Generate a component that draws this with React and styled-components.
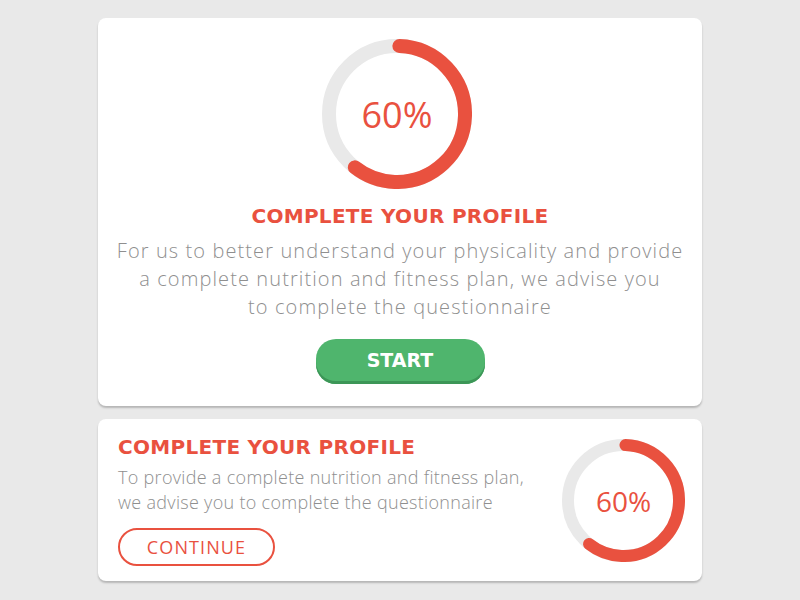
import React from "react";
import styled, { createGlobalStyle } from "styled-components";

const RED = "#e9513f";
const FONT = `"Open Sans", Lato, sans-serif`;
const HEAD = `"DejaVu Sans", "Open Sans", sans-serif`;

const Global = createGlobalStyle`
  html, body { margin: 0; padding: 0; background: #e9e9e9; }
  body { font-family: ${FONT}; }
`;

const Page = styled.div`
  width: 800px;
  height: 600px;
  box-sizing: border-box;
  padding: 18px 98px 0;
  display: flex;
  flex-direction: column;
  gap: 13px;
`;

const Card = styled.div`
  background: #fff;
  border-radius: 8px;
  box-shadow: 0 2px 2px rgba(0, 0, 0, 0.22);
  box-sizing: border-box;
`;

const TopCard = styled(Card)`
  display: flex;
  flex-direction: column;
  align-items: center;
  padding: 21px 0 22px;
`;

const BottomCard = styled(Card)`
  display: flex;
  align-items: center;
  justify-content: space-between;
  padding: 16px 17px 15px 20px;
`;

const Title = styled.h2`
  margin: ${(p) => (p.$center ? "15px 0 0" : "0")};
  font-family: ${HEAD};
  font-size: 20px;
  line-height: 24px;
  font-weight: 700;
  color: ${RED};
  letter-spacing: 0.3px;
  text-align: ${(p) => (p.$center ? "center" : "left")};
`;

const Body = styled.p`
  margin: ${(p) => p.$margin};
  font-size: ${(p) => p.$size}px;
  line-height: ${(p) => p.$lh}px;
  font-weight: 300;
  letter-spacing: ${(p) => p.$ls}px;
  color: #8f8f8f;
  text-align: ${(p) => (p.$center ? "center" : "left")};
`;

const StartButton = styled.button`
  margin-top: 18px;
  width: 169px;
  height: 45px;
  border: none;
  border-radius: 20px;
  background: #4fb56d;
  box-shadow: inset 0 -3px 0 #3c9657;
  color: #fff;
  font-family: ${HEAD};
  font-weight: 700;
  font-size: 19px;
  padding: 0 0 3px;
`;

const ContinueButton = styled.button`
  margin-top: 13px;
  width: 157px;
  height: 38px;
  box-sizing: border-box;
  border: 2px solid ${RED};
  border-radius: 19px;
  background: #fff;
  color: ${RED};
  font-family: ${FONT};
  font-weight: 400;
  font-size: 18px;
  letter-spacing: 1.1px;
  padding: 0;
`;

const TextCol = styled.div`
  display: flex;
  flex-direction: column;
  align-items: flex-start;
`;

const RingWrap = styled.div`
  position: relative;
  width: ${(p) => p.$size}px;
  height: ${(p) => p.$size}px;
  margin-right: ${(p) => p.$shift}px;
  flex: none;
`;

const RingLabel = styled.div`
  position: absolute;
  inset: 0;
  display: flex;
  align-items: center;
  justify-content: center;
  color: ${RED};
  font-size: ${(p) => p.$font}px;
  font-weight: 400;
`;

function Ring({ size, stroke, font, value, shift = 0 }) {
  const r = (size - stroke) / 2;
  const c = 2 * Math.PI * r;
  return (
    <RingWrap $size={size} $shift={shift}>
      <svg width={size} height={size} viewBox={`0 0 ${size} ${size}`}>
        <circle cx={size / 2} cy={size / 2} r={r} fill="none" stroke="#e9e9e9" strokeWidth={stroke} />
        <circle
          cx={size / 2}
          cy={size / 2}
          r={r}
          fill="none"
          stroke={RED}
          strokeWidth={stroke}
          strokeLinecap="round"
          strokeDasharray={`${c * value} ${c}`}
          transform={`rotate(-88 ${size / 2} ${size / 2})`}
        />
      </svg>
      <RingLabel $font={font}>{Math.round(value * 100)}%</RingLabel>
    </RingWrap>
  );
}

export default function App() {
  return (
    <>
      <Global />
      <Page>
        <TopCard>
          <Ring size={150} stroke={14} font={36} value={0.6} shift={6} />
          <Title $center>COMPLETE YOUR PROFILE</Title>
          <Body $center $size={20} $lh={28} $ls={1.1} $margin="9px 0 0">
            For us to better understand your physicality and provide
            <br />
            a complete nutrition and fitness plan, we advise you
            <br />
            to complete the questionnaire
          </Body>
          <StartButton>START</StartButton>
        </TopCard>
        <BottomCard>
          <TextCol>
            <Title>COMPLETE YOUR PROFILE</Title>
            <Body $size={18} $lh={25} $ls={0.3} $margin="6px 0 0">
              To provide a complete nutrition and fitness plan,
              <br />
              we advise you to complete the questionnaire
            </Body>
            <ContinueButton>CONTINUE</ContinueButton>
          </TextCol>
          <Ring size={123} stroke={12} font={28} value={0.6} />
        </BottomCard>
      </Page>
    </>
  );
}
